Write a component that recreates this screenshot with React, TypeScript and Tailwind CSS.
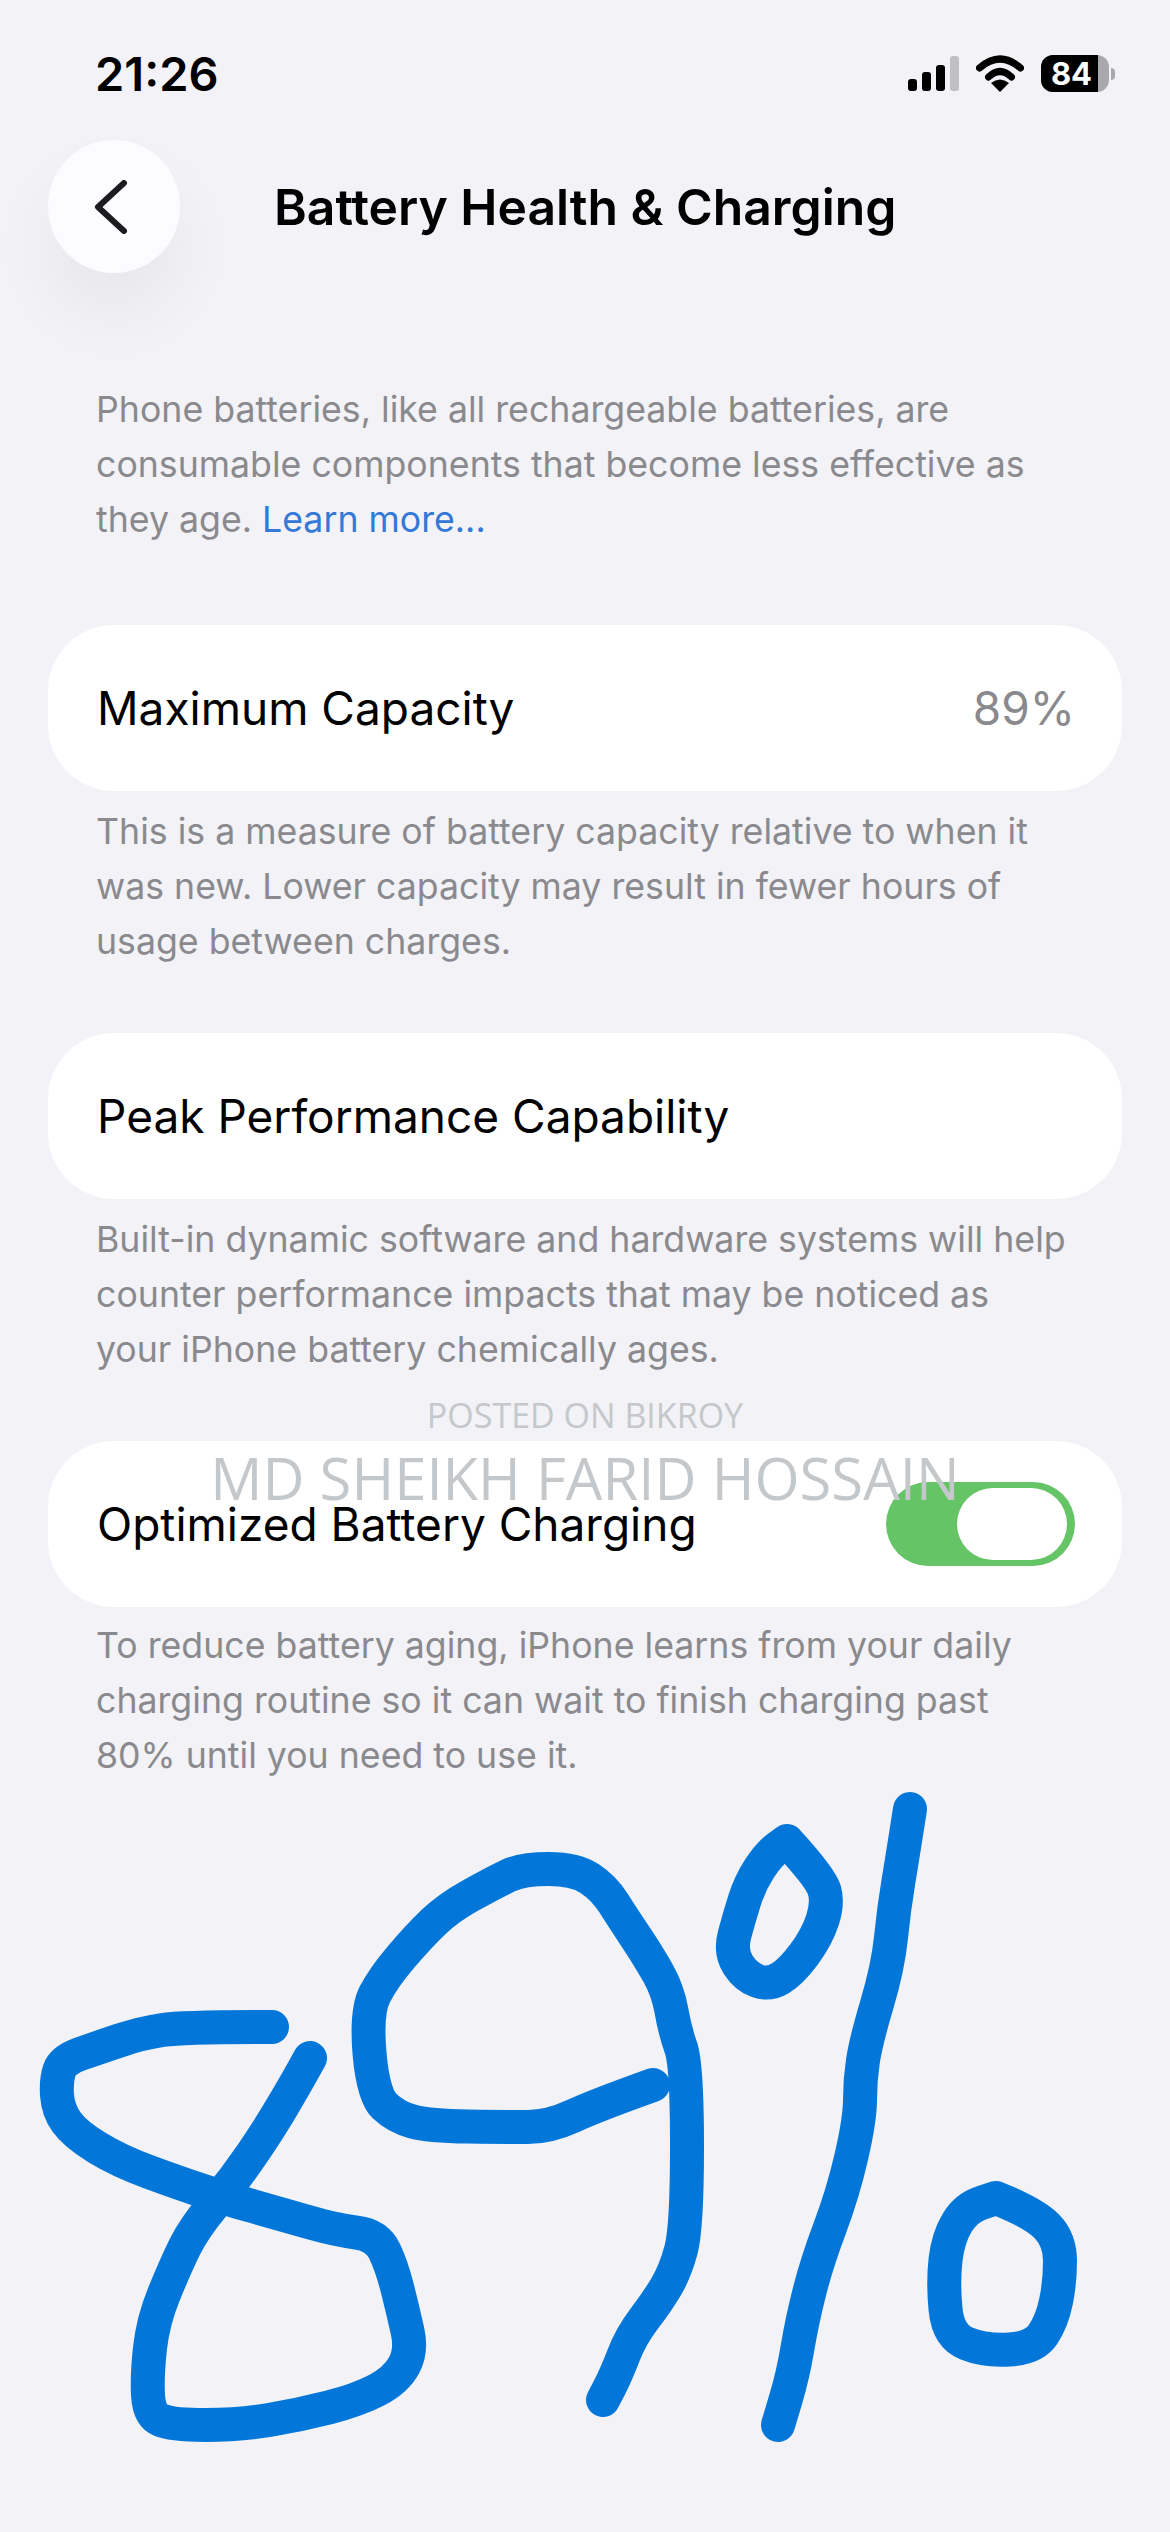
const BLUE = "#0277d9";

type Pt = [number, number];

// hand drawn "89%" strokes, in page pixels
const eight: Pt[] = [[272,2027],[183,2027],[142,2033],[97,2048],[63,2060],[56,2080],[58,2110],[75,2134],[119,2161],[179,2183],[224,2198],[284,2215],[336,2230],[377,2235],[392,2267],[403,2311],[412,2351],[396,2380],[358,2400],[299,2415],[239,2425],[172,2425],[149,2415],[147,2375],[153,2321],[175,2267],[194,2228],[235,2179],[269,2129],[295,2085],[310,2058]];
const nine: Pt[] = [[653,2085],[597,2105],[549,2127],[507,2127],[429,2126],[396,2117],[373,2095],[366,2011],[384,1977],[418,1937],[448,1908],[493,1883],[522,1869],[575,1869],[604,1888],[623,1918],[649,1957],[668,1991],[675,2031],[687,2065],[687,2228],[675,2272],[657,2302],[631,2336],[616,2375],[603,2400]];
const topRing: Pt[] = [[787,1841],[821,1878],[828,1903],[817,1937],[791,1972],[769,1985],[746,1977],[730,1952],[739,1918],[750,1883],[769,1854],[787,1841]];
const slash: Pt[] = [[910,1809],[903,1854],[894,1908],[888,1967],[866,2041],[860,2080],[860,2119],[843,2193],[817,2262],[802,2321],[793,2375],[778,2425]];
const bottomRing: Pt[] = [[996,2198],[1034,2213],[1060,2240],[1060,2282],[1052,2321],[1034,2348],[985,2351],[948,2336],[943,2282],[948,2238],[966,2208],[996,2198]];

const toPath = (pts: Pt[]) => {
  let d = `M${pts[0][0]} ${pts[0][1]}`;
  for (let i = 1; i < pts.length - 1; i++) {
    const mx = (pts[i][0] + pts[i + 1][0]) / 2;
    const my = (pts[i][1] + pts[i + 1][1]) / 2;
    d += ` Q${pts[i][0]} ${pts[i][1]} ${mx} ${my}`;
  }
  const last = pts[pts.length - 1];
  return d + ` L${last[0]} ${last[1]}`;
};

const StatusIcons = () => (
  <div className="flex items-center">
    <div className="flex items-end gap-[5px] h-[35px]">
      <div className="w-[9px] h-[12px] rounded-[3px] bg-black" />
      <div className="w-[9px] h-[19px] rounded-[3px] bg-black" />
      <div className="w-[9px] h-[26px] rounded-[3px] bg-black" />
      <div className="w-[9px] h-[35px] rounded-[3px] bg-[#c0c0c4]" />
    </div>
    <svg className="ml-[17px]" width="48" height="37" viewBox="0 0 48 37">
      <path d="M3.5 13 Q24 -5 44.5 13" fill="none" stroke="#000" strokeWidth="7" strokeLinecap="round" />
      <path d="M12.5 22 Q24 11 35.5 22" fill="none" stroke="#000" strokeWidth="7" strokeLinecap="round" />
      <path d="M24 37 L15 28 Q24 21 33 28 Z" fill="#000" />
    </svg>
    <div className="ml-[17px] flex items-center">
      <div className="relative w-[68px] h-[37px] rounded-[12px] bg-[#a9a9ab] overflow-hidden">
        <div className="w-[57px] h-[37px] bg-black flex items-center justify-center">
          <span className="text-white text-[31px] font-bold leading-none pl-[4px]">84</span>
        </div>
      </div>
      <div className="ml-[2px] w-[4px] h-[12px] rounded-r-full bg-[#a9a9ab]" />
    </div>
  </div>
);

const Card = ({ children }: { children: React.ReactNode }) => (
  <div className="mx-[48px] h-[166px] rounded-[66px] bg-white flex items-center justify-between pl-[49px] pr-[47px] text-[46px] text-black">
    {children}
  </div>
);

const Note = ({ lines, className }: { lines: React.ReactNode[]; className: string }) => (
  <div className={`px-[96px] text-[35.7px] leading-[55px] text-[#8a8a8e] ${className}`}>
    {lines.map((line, i) => (
      <div key={i} className="whitespace-nowrap">{line}</div>
    ))}
  </div>
);

export default function App() {
  return (
    <div className="relative w-[1170px] h-[2532px] overflow-hidden bg-[#f2f2f7] font-['Inter',sans-serif]">
      <div className="h-[140px] px-[95px] pt-[49px] pr-[55px] flex items-start justify-between">
        <span className="text-[47px] leading-[50px] font-semibold text-black">21:26</span>
        <div className="pt-[6px]"><StatusIcons /></div>
      </div>

      <div className="flex items-center pl-[48px]">
        <div className="w-[132px] h-[133px] rounded-full bg-[#fcfcfe] flex items-center pl-[46px] shadow-[0_40px_70px_rgba(0,0,0,0.05)]">
          <svg width="34" height="54" viewBox="0 0 34 54">
            <path d="M30 3 L4 27 L30 51" fill="none" stroke="#1c1c1e" strokeWidth="6" strokeLinecap="round" strokeLinejoin="round" />
          </svg>
        </div>
        <span className="ml-[94px] pt-[2px] text-[49.8px] font-semibold text-black">Battery Health &amp; Charging</span>
      </div>

      <Note
        className="mt-[109px]"
        lines={[
          "Phone batteries, like all rechargeable batteries, are",
          "consumable components that become less effective as",
          <>they age. <span className="text-[#3478d8]">Learn more...</span></>,
        ]}
      />

      <div className="mt-[78px]">
        <Card>
          <span>Maximum Capacity</span>
          <span className="text-[#8a8a8e]">89%</span>
        </Card>
      </div>
      <Note
        className="mt-[13px]"
        lines={[
          "This is a measure of battery capacity relative to when it",
          "was new. Lower capacity may result in fewer hours of",
          "usage between charges.",
        ]}
      />

      <div className="mt-[64px]">
        <Card>
          <span>Peak Performance Capability</span>
        </Card>
      </div>
      <Note
        className="mt-[13px]"
        lines={[
          "Built-in dynamic software and hardware systems will help",
          "counter performance impacts that may be noticed as",
          "your iPhone battery chemically ages.",
        ]}
      />

      <div className="mt-[64px]">
        <Card>
          <span>Optimized Battery Charging</span>
          <div className="w-[189px] h-[84px] rounded-full bg-[#65c466] flex items-center justify-end pr-[8px]">
            <div className="w-[110px] h-[72px] rounded-full bg-white" />
          </div>
        </Card>
      </div>
      <Note
        className="mt-[11px]"
        lines={[
          "To reduce battery aging, iPhone learns from your daily",
          "charging routine so it can wait to finish charging past",
          "80% until you need to use it.",
        ]}
      />

      {/* watermark sits over the last card */}
      <div className="absolute left-0 top-[1392px] w-full flex flex-col items-center font-['Open_Sans',sans-serif] text-[#c5c8cb] pointer-events-none">
        <span className="text-[34px] leading-[46px]">POSTED ON BIKROY</span>
        <span className="text-[58px] leading-[72px] mt-[4px]">MD SHEIKH FARID HOSSAIN</span>
      </div>

      <svg className="absolute left-0 top-0" width="1170" height="2532" viewBox="0 0 1170 2532" fill="none" stroke={BLUE} strokeWidth="34" strokeLinecap="round" strokeLinejoin="round">
        <path d={toPath(eight)} />
        <path d={toPath(nine)} />
        <path d={toPath(topRing)} />
        <path d={toPath(slash)} />
        <path d={toPath(bottomRing)} />
      </svg>
    </div>
  );
}
